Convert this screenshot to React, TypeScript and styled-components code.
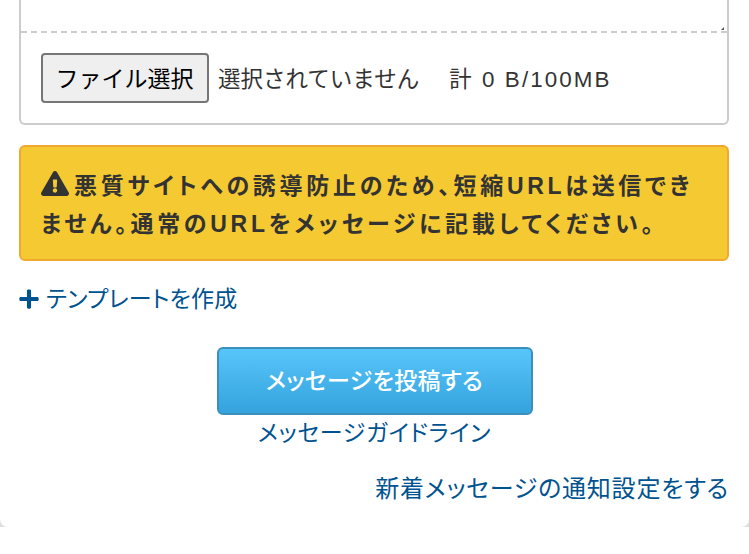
import React from "react";
import styled, { createGlobalStyle } from "styled-components";
import { FaExclamationTriangle, FaPlus } from "react-icons/fa";

const fontStack = `"Liberation Sans", "Noto Sans CJK JP", sans-serif`;

const GlobalStyle = createGlobalStyle`
  html, body {
    margin: 0;
    padding: 0;
    background: #ffffff;
    overflow: hidden;
  }
`;

const App = () => {
  return (
    <Page>
      <GlobalStyle />
      <Card>
        <MessageBox>
          <MessageInput aria-label="メッセージ" />
          <ResizeDot />
          <AttachRow>
            <FileButton type="button">ファイル選択</FileButton>
            <FileStatus>選択されていません</FileStatus>
            <FileTotal>計 0 B/100MB</FileTotal>
          </AttachRow>
        </MessageBox>
        <Warning>
          <WarningIcon />
          悪質サイトへの誘導防止のため、短縮URLは送信できません。通常のURLをメッセージに記載してください。
        </Warning>
        <TemplateLink href="#">
          <PlusIcon />
          テンプレートを作成
        </TemplateLink>
        <SubmitArea>
          <SubmitButton type="button">メッセージを投稿する</SubmitButton>
          <GuideLink href="#">メッセージガイドライン</GuideLink>
        </SubmitArea>
        <NotifyRow>
          <NotifyLink href="#">新着メッセージの通知設定をする</NotifyLink>
        </NotifyRow>
      </Card>
    </Page>
  );
};

const Page = styled.div`
  width: 749px;
  height: 554px;
  overflow: hidden;
  background: #ffffff;
  font-family: ${fontStack};
`;

const Card = styled.div`
  position: relative;
  box-sizing: border-box;
  height: 527px;
  padding: 0 20px;
  background: #ffffff;
  &::before,
  &::after {
    content: "";
    position: absolute;
    bottom: 0;
    width: 7px;
    height: 7px;
  }
  &::before {
    left: 0;
    background: radial-gradient(circle at top right, transparent 6px, #dddddd 7.5px);
  }
  &::after {
    right: 0;
    background: radial-gradient(circle at top left, transparent 6px, #dddddd 7.5px);
  }
`;

const MessageBox = styled.div`
  position: relative;
  box-sizing: border-box;
  width: 710px;
  margin-left: -1px;
  border: 2px solid #cccccc;
  border-top: none;
  border-radius: 0 0 6px 6px;
`;

const MessageInput = styled.textarea`
  display: block;
  box-sizing: border-box;
  width: 100%;
  height: 33px;
  margin: 0;
  padding: 0;
  border: none;
  border-bottom: 2px dashed #cccccc;
  outline: none;
  background: #ffffff;
  resize: none;
`;

const ResizeDot = styled.span`
  position: absolute;
  top: 27px;
  right: 3px;
  width: 3px;
  height: 3px;
  background: #555555;
  clip-path: polygon(100% 0, 100% 100%, 0 100%);
`;

const AttachRow = styled.div`
  display: flex;
  align-items: center;
  height: 90px;
  padding: 0 0 0 20px;
  box-sizing: border-box;
`;

const FileButton = styled.button`
  box-sizing: border-box;
  width: 168px;
  height: 50px;
  padding: 0 1px 3px 0;
  background: #efefef;
  border: 2px solid #767676;
  border-radius: 4px;
  color: #000000;
  font-family: ${fontStack};
  font-size: 23px;
`;

const FileStatus = styled.span`
  margin-left: 9px;
  padding-bottom: 3px;
  color: #333333;
  font-size: 22.5px;
`;

const FileTotal = styled.span`
  margin-left: 30px;
  padding-bottom: 3px;
  color: #333333;
  font-size: 22.4px;
  letter-spacing: 2.1px;
`;

const Warning = styled.div`
  box-sizing: border-box;
  width: 710px;
  height: 116px;
  margin: 20px 0 0 -1px;
  padding: 20px 20px;
  background: #f5c931;
  border: 2px solid #f0a92e;
  border-radius: 6px;
  color: #333333;
  font-size: 23px;
  font-weight: 700;
  font-feature-settings: "palt";
  line-height: 38px;
  letter-spacing: 3.7px;
`;

const WarningIcon = styled(FaExclamationTriangle)`
  width: 28px;
  height: 25px;
  margin-right: 5px;
  vertical-align: -2px;
`;

const TemplateLink = styled.a`
  display: block;
  margin: 22px 0 0 -1px;
  color: #00538f;
  font-size: 23px;
  font-feature-settings: "palt";
  line-height: 32px;
  letter-spacing: 0.2px;
  text-decoration: none;
`;

const PlusIcon = styled(FaPlus)`
  width: 22px;
  height: 22px;
  margin: 0 6px 0 -1px;
  vertical-align: -3px;
`;

const SubmitArea = styled.div`
  display: flex;
  flex-direction: column;
  align-items: center;
  margin-top: 32px;
`;

const SubmitButton = styled.button`
  box-sizing: border-box;
  width: 316px;
  height: 68px;
  padding: 0 0 4px;
  background: linear-gradient(#58c5fa, #34a3dd);
  border: 2px solid #3a8fbb;
  border-radius: 6px;
  color: #ffffff;
  font-family: ${fontStack};
  font-size: 23px;
  font-weight: 500;
  font-feature-settings: "palt";
  letter-spacing: 0.4px;
`;

const GuideLink = styled.a`
  margin-top: 2px;
  color: #00538f;
  font-size: 23px;
  font-feature-settings: "palt";
  line-height: 32px;
  letter-spacing: 0.7px;
  text-decoration: none;
`;

const NotifyRow = styled.div`
  margin-top: 24px;
  text-align: right;
`;

const NotifyLink = styled.a`
  color: #00538f;
  font-size: 24px;
  font-feature-settings: "palt";
  line-height: 32px;
  letter-spacing: 0.8px;
  text-decoration: none;
`;

export default App;
